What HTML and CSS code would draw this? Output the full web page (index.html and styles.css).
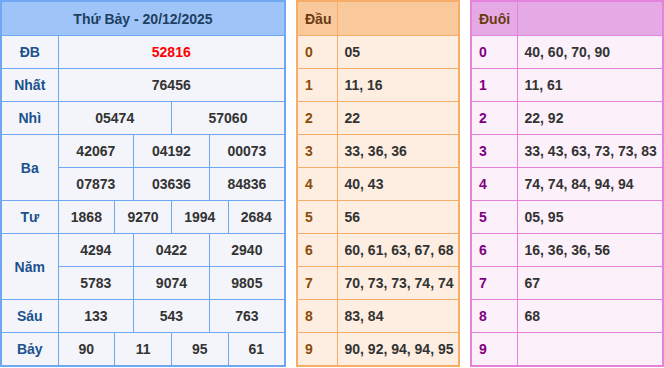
FILE: index.html
```html
<!DOCTYPE html>
<html lang="vi">
<head>
  <meta charset="UTF-8" />
  <meta name="viewport" content="width=device-width, initial-scale=1.0" />
  <title>Kết quả xổ số</title>
  <link rel="stylesheet" href="styles.css">
</head>
<body>

  <div class="board">

    <!-- Ket qua -->
    <table class="kq">
      <colgroup>
        <col class="c-label">
        <col span="12">
      </colgroup>
      <tr><th colspan="13" class="title">Thứ Bảy - 20/12/2025</th></tr>
      <tr><td class="label">ĐB</td><td colspan="12" class="db">52816</td></tr>
      <tr><td class="label">Nhất</td><td colspan="12">76456</td></tr>
      <tr><td class="label">Nhì</td><td colspan="6">05474</td><td colspan="6">57060</td></tr>
      <tr><td class="label" rowspan="2">Ba</td><td colspan="4">42067</td><td colspan="4">04192</td><td colspan="4">00073</td></tr>
      <tr><td colspan="4">07873</td><td colspan="4">03636</td><td colspan="4">84836</td></tr>
      <tr><td class="label">Tư</td><td colspan="3">1868</td><td colspan="3">9270</td><td colspan="3">1994</td><td colspan="3">2684</td></tr>
      <tr><td class="label" rowspan="2">Năm</td><td colspan="4">4294</td><td colspan="4">0422</td><td colspan="4">2940</td></tr>
      <tr><td colspan="4">5783</td><td colspan="4">9074</td><td colspan="4">9805</td></tr>
      <tr><td class="label">Sáu</td><td colspan="4">133</td><td colspan="4">543</td><td colspan="4">763</td></tr>
      <tr><td class="label">Bảy</td><td colspan="3">90</td><td colspan="3">11</td><td colspan="3">95</td><td colspan="3">61</td></tr>
    </table>

    <!-- Dau -->
    <table class="loto dau">
      <colgroup>
        <col class="c-num">
        <col>
      </colgroup>
      <tr><th>Đầu</th><th></th></tr>
      <tr><td class="num">0</td><td>05</td></tr>
      <tr><td class="num">1</td><td>11, 16</td></tr>
      <tr><td class="num">2</td><td>22</td></tr>
      <tr><td class="num">3</td><td>33, 36, 36</td></tr>
      <tr><td class="num">4</td><td>40, 43</td></tr>
      <tr><td class="num">5</td><td>56</td></tr>
      <tr><td class="num">6</td><td>60, 61, 63, 67, 68</td></tr>
      <tr><td class="num">7</td><td>70, 73, 73, 74, 74</td></tr>
      <tr><td class="num">8</td><td>83, 84</td></tr>
      <tr><td class="num">9</td><td>90, 92, 94, 94, 95</td></tr>
    </table>

    <!-- Duoi -->
    <table class="loto duoi">
      <colgroup>
        <col class="c-num">
        <col>
      </colgroup>
      <tr><th>Đuôi</th><th></th></tr>
      <tr><td class="num">0</td><td>40, 60, 70, 90</td></tr>
      <tr><td class="num">1</td><td>11, 61</td></tr>
      <tr><td class="num">2</td><td>22, 92</td></tr>
      <tr><td class="num">3</td><td>33, 43, 63, 73, 73, 83</td></tr>
      <tr><td class="num">4</td><td>74, 74, 84, 94, 94</td></tr>
      <tr><td class="num">5</td><td>05, 95</td></tr>
      <tr><td class="num">6</td><td>16, 36, 36, 56</td></tr>
      <tr><td class="num">7</td><td>67</td></tr>
      <tr><td class="num">8</td><td>68</td></tr>
      <tr><td class="num">9</td><td></td></tr>
    </table>

  </div>

</body>
</html>
```

FILE: styles.css
```css
body {
  margin: 0;
  padding: 0;
  background: #fff;
  font-family: "Liberation Sans", Arial, sans-serif;
  font-size: 14px;
  font-weight: bold;
  color: #333;
}
.board {
  display: flex;
  gap: 10px;
  align-items: flex-start;
}
table {
  border-collapse: collapse;
  table-layout: fixed;
}
th, td {
  height: 32px;
  padding: 0;
  vertical-align: middle;
}

/* ket qua */
.kq {
  width: 286px;
  border: 2px solid #6fa7f2;
  background: #f3f5fa;
}
.kq .c-label {
  width: 57px;
}
.kq td {
  border: 1px solid #6fa7f2;
  text-align: center;
}
.kq th.title {
  height: 33px;
  background: #9fc5f8;
  color: #1e3f63;
  border-bottom: 1px solid #6fa7f2;
}
.kq td.label {
  color: #1b518e;
}
.kq td.db {
  color: #f00;
}

/* loto */
.loto th, .loto td {
  text-align: left;
  padding-left: 7px;
  white-space: nowrap;
}
.loto th {
  height: 33px;
}
.dau {
  width: 164px;
  border: 2px solid #f6ad68;
  background: #fdeee1;
}
.dau .c-num {
  width: 40px;
}
.dau th, .dau td {
  border: 1px solid #f6ad68;
}
.dau th {
  background: #f9c99c;
  color: #6b3a10;
}
.dau td.num {
  color: #8a4b0c;
}
.duoi {
  width: 194px;
  border: 2px solid #e583dc;
  background: #fcf0fa;
}
.duoi .c-num {
  width: 46px;
}
.duoi th, .duoi td {
  border: 1px solid #e583dc;
}
.duoi th {
  background: #e5aae6;
  color: #6b3a10;
}
.duoi td.num {
  color: #800080;
}
```
